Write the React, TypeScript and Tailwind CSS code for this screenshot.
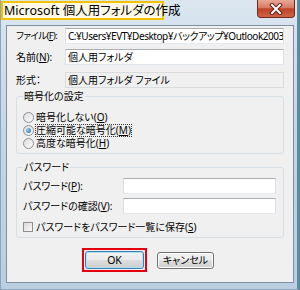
import type { ReactElement, ReactNode } from "react";

const font = "font-['Noto_Sans','Noto_Sans_CJK_JP',sans-serif] [font-feature-settings:'palt']";

function Key({ children }: { children: ReactNode }): ReactElement {
  return <span className="underline underline-offset-[1px]">{children}</span>;
}

function TextBox({ value, readOnly, width, tight }: { value?: string; readOnly?: boolean; width: string; tight?: boolean }): ReactElement {
  return (
    <div
      className={`${width} h-[16px] overflow-hidden whitespace-nowrap border px-[2px] leading-[14px] ${tight ? "tracking-[-0.45px]" : ""} ${
        readOnly
          ? "border-[#d9dcdf] bg-[#f0f0f0]"
          : "border-[#abadb3] border-l-[#dbdfe6] border-r-[#dbdfe6] border-b-[#e3e9ef] bg-white"
      }`}
    >
      {value}
    </div>
  );
}

function Radio({ checked }: { checked?: boolean }): ReactElement {
  return (
    <span className="flex h-[11px] w-[11px] shrink-0 items-center justify-center rounded-full border border-[#8e9196] bg-gradient-to-br from-[#dedede] to-[#fbfbfb]">
      {checked && (
        <span className="h-[5px] w-[5px] rounded-full bg-[radial-gradient(circle_at_35%_35%,#9fd0f7,#1a5ca6)]" />
      )}
    </span>
  );
}

export default function App(): ReactElement {
  return (
    <div className={`${font} flex h-[290px] w-[300px] flex-col border-b border-l border-r-[3px] border-[#8ea4b8] border-r-[#5d8aa3] bg-[linear-gradient(to_bottom,#dbe6f0,#c6d7e6_40%,#b9cee0)] text-black`}>
      {/* title bar */}
      <div className="flex h-[25px] items-start justify-between">
        <div className="mt-[1px] flex h-[19px] w-[163px] items-center whitespace-nowrap border-2 border-[#f2c200] bg-[#fffbe6] pl-[1px] text-[12.5px] leading-[15px]">
          Microsoft 個人用フォルダの作成
        </div>
        <div className="mr-[2px] flex h-[18px] w-[38px] items-center justify-center rounded-b-[4px] border border-t-0 border-[#6f2a1e] bg-[linear-gradient(to_bottom,#e9a896_0%,#d77a63_45%,#c0422a_52%,#d06447_100%)]">
          <svg width="14" height="12" viewBox="0 0 14 12">
            <path d="M3 2 L11 10 M11 2 L3 10" stroke="#5a1e14" strokeWidth="4" strokeLinecap="square" />
            <path d="M3 2 L11 10 M11 2 L3 10" stroke="#ffffff" strokeWidth="2" strokeLinecap="square" />
          </svg>
        </div>
      </div>

      {/* client area */}
      <div className="ml-[5px] flex h-[258px] w-[288px] flex-col whitespace-nowrap border border-[#7f8fa0] bg-[#f0f0f0] pl-[9px] pr-[8px] text-[10px]">
        <div className="mt-[2px] flex items-center">
          <span className="w-[49px] text-[9.5px] tracking-[-0.6px] leading-[14px]">ファイル(<Key>F</Key>):</span>
          <TextBox width="w-[219px]" tight value="C:¥Users¥EVT¥Desktop¥バックアップ¥Outlook2003¥" />
        </div>
        <div className="mt-[5px] flex items-center">
          <span className="w-[49px] leading-[14px]">名前(<Key>N</Key>):</span>
          <TextBox width="w-[219px]" value="個人用フォルダ" />
        </div>
        <div className="mt-[7px] flex items-center">
          <span className="w-[49px] leading-[14px]">形式：</span>
          <TextBox width="w-[219px]" readOnly value="個人用フォルダ ファイル" />
        </div>

        <fieldset className="mt-[1px] w-[268px] rounded-[3px] border border-[#d5dfe5] pb-[3px] pl-[6px] pt-[8px]">
          <legend className="px-[1px] leading-[14px]">暗号化の設定</legend>
          <div className="flex h-[13px] items-center gap-[2px]">
            <Radio />
            <span className="leading-[13px]">暗号化しない(<Key>O</Key>)</span>
          </div>
          <div className="flex h-[13px] items-center gap-[1px]">
            <Radio checked />
            <span className="border border-dotted border-[#333] leading-[11px]">
              圧縮可能な暗号化(<Key>M</Key>)
            </span>
          </div>
          <div className="flex h-[13px] items-center gap-[2px]">
            <Radio />
            <span className="leading-[13px]">高度な暗号化(<Key>H</Key>)</span>
          </div>
        </fieldset>

        <fieldset className="mt-[6px] w-[268px] rounded-[3px] border border-[#d5dfe5] pb-[4px] pl-[6px] pt-[4px]">
          <legend className="px-[1px] leading-[14px]">パスワード</legend>
          <div className="flex items-center">
            <span className="w-[100px] leading-[14px]">パスワード(<Key>P</Key>):</span>
            <TextBox width="w-[153px]" />
          </div>
          <div className="mt-[4px] flex items-center">
            <span className="w-[100px] leading-[14px]">パスワードの確認(<Key>V</Key>):</span>
            <TextBox width="w-[153px]" />
          </div>
          <div className="mt-[7px] flex h-[12px] items-center gap-[3px]">
            <span className="h-[10px] w-[10px] shrink-0 border border-[#8f8f8f] bg-gradient-to-br from-[#dcdcdc] to-[#f8f8f8]" />
            <span className="leading-[12px]">パスワードをパスワード一覧に保存(<Key>S</Key>)</span>
          </div>
        </fieldset>

        <div className="ml-[66px] mt-[10px] flex items-center gap-[10px]">
          <div className="flex h-[24px] w-[65px] items-center justify-center border-2 border-[#e60012]">
            <button
              type="button"
              className="h-[18px] w-[59px] rounded-[3px] border border-[#3c7fb1] bg-[linear-gradient(to_bottom,#f2f2f2_0%,#ebebeb_48%,#dddddd_52%,#cfcfcf_100%)] text-[10.5px] leading-[14px] shadow-[inset_0_0_0_1px_#a8e3f7]"
            >
              OK
            </button>
          </div>
          <button
            type="button"
            className="h-[17px] w-[57px] rounded-[3px] border border-[#707070] bg-[linear-gradient(to_bottom,#f2f2f2_0%,#ebebeb_48%,#dddddd_52%,#cfcfcf_100%)] text-[10px] leading-[14px] shadow-[inset_0_0_0_1px_#fcfcfc]"
          >
            キャンセル
          </button>
        </div>
      </div>
    </div>
  );
}
